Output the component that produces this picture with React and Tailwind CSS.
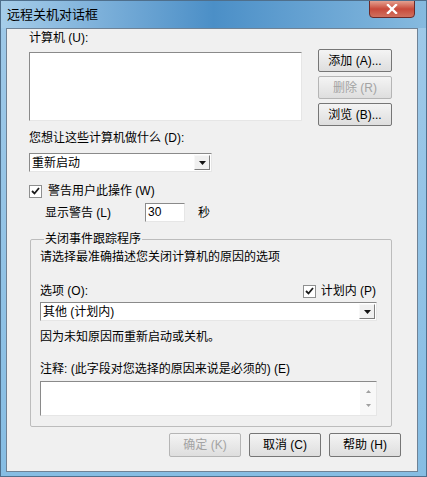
import React from 'react';

const Check = () => (
  <div className="w-[13px] h-[13px] border border-[#8e8f8f] bg-white flex items-center justify-center shrink-0">
    <svg width="9" height="8" viewBox="0 0 9 8">
      <path d="M1 4 L3.5 6.5 L8 1" fill="none" stroke="#1b1b1b" strokeWidth="1.8" />
    </svg>
  </div>
);

const Btn = ({ children, disabled, className = '' }) => (
  <div
    className={`flex items-center justify-center border rounded-[2px] bg-gradient-to-b from-[#f4f4f4] to-[#dedede] ${
      disabled ? 'text-[#a3a3a3] border-[#b5b5b5]' : 'text-black border-[#767676]'
    } ${className}`}
  >
    {children}
  </div>
);

const Combo = ({ value, className = '' }) => (
  <div className={`flex items-center h-[19px] bg-white border border-[#8a8a8a] border-r-[#e6e6e6] border-b-[#e6e6e6] ${className}`}>
    <span className="flex-1 pl-[2px] leading-[14px]">{value}</span>
    <div className="w-[16px] h-[15px] mr-[1px] flex items-center justify-center bg-[#f0f0f0] border border-[#f8f8f8] border-r-[#7d7d7d] border-b-[#7d7d7d]">
      <svg width="7" height="4" viewBox="0 0 7 4">
        <path d="M0 0 H7 L3.5 4 Z" fill="#111" />
      </svg>
    </div>
  </div>
);

export default function App() {
  return (
    <div className='w-[427px] h-[477px] flex flex-col bg-gradient-to-b from-[#9fc9e8] to-[#86bde3] border border-[#4f6f8c] font-["Liberation_Sans","Noto_Sans_CJK_SC",sans-serif] text-[12px] text-black overflow-hidden'>
      {/* title bar */}
      <div className="h-[27px] flex justify-between items-start bg-gradient-to-r from-[#a6cde9] via-[#4b8fc7] to-[#86badf]">
        <span className="pl-[6px] pt-[7px] leading-[14px] text-[13px]">远程关机对话框</span>
        <div className="w-[46px] h-[18px] mr-[11px] -mt-px rounded-b-[4px] border border-[#6b2a2a] bg-gradient-to-b from-[#e3a090] via-[#c8493a] to-[#d0705f] flex items-center justify-center">
          <svg width="12" height="10" viewBox="0 0 12 10">
            <path d="M2 1 L10 9 M10 1 L2 9" stroke="#fff" strokeWidth="2.4" strokeLinecap="square" />
          </svg>
        </div>
      </div>

      {/* content */}
      <div className="flex-1 ml-[5px] mr-[8px] mb-[4px] bg-[#f0f0f0] border border-[#6f8295] pl-[22px] flex flex-col">
        <span className="mt-[2px] leading-[14px]">计算机 (U):</span>

        <div className="mt-[4px] flex items-start">
          <div className="mt-[3px] w-[273px] h-[69px] bg-white border border-[#8a8a8a] border-r-[#e6e6e6] border-b-[#e6e6e6]" />
          <div className="ml-[16px] flex flex-col gap-[4px]">
            <Btn className="w-[74px] h-[23px]">添加 (A)...</Btn>
            <Btn disabled className="w-[74px] h-[23px]">删除 (R)</Btn>
            <Btn className="w-[74px] h-[23px]">浏览 (B)...</Btn>
          </div>
        </div>

        <span className="mt-[5px] leading-[14px]">您想让这些计算机做什么 (D):</span>
        <Combo value="重新启动" className="mt-[8px] w-[183px]" />

        <div className="mt-[12px] flex items-center h-[14px]">
          <Check />
          <span className="ml-[6px] leading-[14px]">警告用户此操作 (W)</span>
        </div>

        <div className="mt-[5px] flex items-center h-[19px]">
          <span className="ml-[16px] w-[100px] leading-[14px]">显示警告 (L)</span>
          <div className="w-[40px] h-[19px] bg-white border border-[#8a8a8a] border-r-[#e6e6e6] border-b-[#e6e6e6] pl-[2px] leading-[17px]">30</div>
          <span className="ml-[13px] leading-[14px]">秒</span>
        </div>

        <fieldset className="mt-[10px] ml-px w-[362px] border border-[#bcbcbc] rounded-[2px] pl-[9px] pb-[10px] flex flex-col">
          <legend className="ml-[4px] px-[1px] leading-[14px]">关闭事件跟踪程序</legend>
          <span className="mt-[4px] leading-[14px]">请选择最准确描述您关闭计算机的原因的选项</span>

          <div className="mt-[20px] w-[336px] flex items-center h-[14px]">
            <span className="flex-1 leading-[14px]">选项 (O):</span>
            <Check />
            <span className="ml-[5px] leading-[14px]">计划内 (P)</span>
          </div>

          <Combo value="其他 (计划内)" className="mt-[4px] w-[337px]" />

          <span className="mt-[9px] leading-[14px]">因为未知原因而重新启动或关机。</span>
          <span className="mt-[18px] leading-[14px]">注释: (此字段对您选择的原因来说是必须的) (E)</span>

          <div className="mt-[5px] w-[337px] h-[35px] flex bg-white border border-[#8a8a8a] border-r-[#e6e6e6] border-b-[#e6e6e6]">
            <div className="flex-1" />
            <div className="w-[16px] flex flex-col items-center justify-between py-[8px] bg-[#f8f8f8]">
              <svg width="5" height="3" viewBox="0 0 5 3">
                <path d="M0 3 H5 L2.5 0 Z" fill="#a0a0a0" />
              </svg>
              <svg width="5" height="3" viewBox="0 0 5 3">
                <path d="M0 0 H5 L2.5 3 Z" fill="#a0a0a0" />
              </svg>
            </div>
          </div>
        </fieldset>

        <div className="mt-[6px] ml-[140px] flex gap-[8px]">
          <Btn disabled className="w-[72px] h-[24px]">确定 (K)</Btn>
          <Btn className="w-[72px] h-[24px]">取消 (C)</Btn>
          <Btn className="w-[72px] h-[24px]">帮助 (H)</Btn>
        </div>
      </div>
    </div>
  );
}
